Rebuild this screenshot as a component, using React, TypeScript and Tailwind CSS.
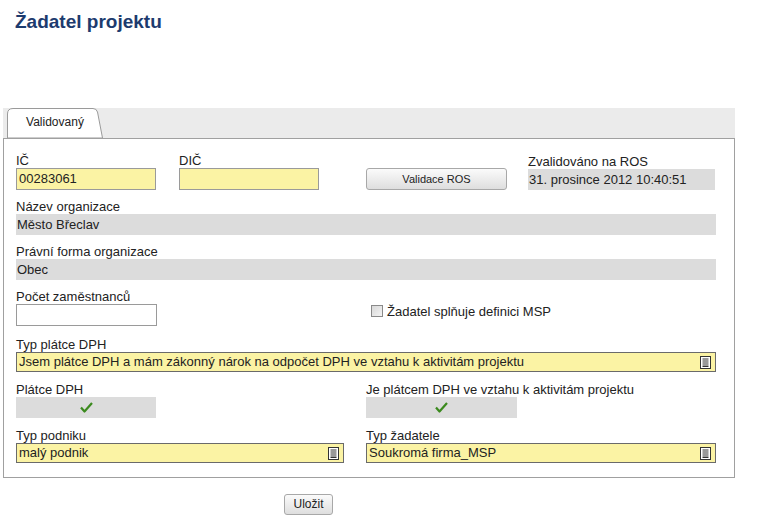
import React from "react";

const font = { fontFamily: '"Liberation Sans", Arial, sans-serif' };

function Label({ children }: { children: React.ReactNode }) {
  return <div className="text-[13px] leading-[15px] text-[#222]">{children}</div>;
}

function YellowInput({ value, w }: { value?: string; w: string }) {
  return (
    <div className={`${w} h-[22px] border border-[#9a9a9a] bg-[#fbf3a4] pl-[2px] text-[13px] leading-[20px] text-[#222]`}>
      {value}
    </div>
  );
}

function GrayField({ value, w, children }: { value?: string; w: string; children?: React.ReactNode }) {
  return (
    <div className={`${w} h-[21px] bg-[#dcdcdc] pl-[1px] text-[13px] leading-[21px] text-[#222]`}>
      {value}
      {children}
    </div>
  );
}

function ListIcon() {
  return (
    <svg width="11" height="13" viewBox="0 0 11 13" className="shrink-0">
      <rect x="0.5" y="0.5" width="10" height="12" fill="#fff" stroke="#333" />
      <path d="M2.5 3h6M2.5 5h6M2.5 7h6M2.5 9h6M2.5 10.5h6" stroke="#333" strokeWidth="1" />
    </svg>
  );
}

function Select({ value, w }: { value: string; w: string }) {
  return (
    <div className={`${w} flex h-[20px] items-center justify-between border border-[#6a6a6a] bg-[#fbf3a4] pl-[2px] pr-[4px] text-[13px] text-[#222]`}>
      <span className="leading-[18px]">{value}</span>
      <ListIcon />
    </div>
  );
}

function Check() {
  return (
    <svg width="13" height="11" viewBox="0 0 13 11">
      <path d="M1 5.5 L4.5 9.5 L12 1" fill="none" stroke="#3b8a1e" strokeWidth="2.2" strokeLinejoin="round" />
    </svg>
  );
}

export default function App() {
  return (
    <div className="min-h-[531px] w-[757px] bg-white" style={font}>
      <h1 className="pl-[15px] pt-[10px] text-[19px] font-bold leading-[23px] text-[#1d3b6e]">Žadatel projektu</h1>

      <div className="ml-[3px] mt-[75px] w-[732px]">
        <div className="h-[30px] bg-[#ebebeb] pl-[4px]">
          <div className="relative h-[30px] w-[96px]">
            <svg className="absolute inset-0" width="96" height="30" viewBox="0 0 96 30">
              <path d="M0.5 30 V6 Q0.5 0.5 6 0.5 H86 Q89.5 0.5 90.5 4 L95.5 30 Z" fill="#fff" stroke="#9a9a9a" />
            </svg>
            <div className="relative pt-[7px] text-center text-[12px] leading-[14px] text-[#222]">Validovaný</div>
          </div>
        </div>

        <div className="border border-[#a0a0a0] pb-[14px] pl-[12px] pr-[17px] pt-[14px]">
          <div className="flex items-end">
            <div>
              <Label>IČ</Label>
              <YellowInput value="00283061" w="w-[140px]" />
            </div>
            <div className="ml-[23px]">
              <Label>DIČ</Label>
              <YellowInput w="w-[140px]" />
            </div>
            <button className="ml-[47px] h-[22px] w-[141px] rounded-[3px] border border-[#a8a8a8] bg-gradient-to-b from-[#fbfbfb] to-[#dedede] text-[11px] text-[#222]">
              Validace ROS
            </button>
            <div className="ml-[21px]">
              <Label>Zvalidováno na ROS</Label>
              <GrayField value="31. prosince 2012 10:40:51" w="w-[187px]" />
            </div>
          </div>

          <div className="mt-[9px]">
            <Label>Název organizace</Label>
            <GrayField value="Město Břeclav" w="w-[700px]" />
          </div>

          <div className="mt-[9px]">
            <Label>Právní forma organizace</Label>
            <GrayField value="Obec" w="w-[700px]" />
          </div>

          <div className="mt-[9px] grid grid-cols-[328px_350px] gap-x-[22px]">
            <div>
              <Label>Počet zaměstnanců</Label>
              <div className="h-[22px] w-[141px] border border-[#9a9a9a] bg-white" />
            </div>
            <label className="flex items-center self-end pb-[5px] pl-[5px] text-[13px] text-[#222]">
              <span className="mr-[4px] h-[12px] w-[12px] border border-[#8a8a8a] bg-gradient-to-br from-[#d8d8d8] to-[#f4f4f4]" />
              Žadatel splňuje definici MSP
            </label>
          </div>

          <div className="mt-[11px]">
            <Label>Typ plátce DPH</Label>
            <Select value="Jsem plátce DPH a mám zákonný nárok na odpočet DPH ve vztahu k aktivitám projektu" w="w-[700px]" />
          </div>

          <div className="mt-[10px] grid grid-cols-[328px_350px] gap-x-[22px]">
            <div>
              <Label>Plátce DPH</Label>
              <div className="flex h-[21px] w-[140px] items-center justify-center bg-[#dcdcdc]">
                <Check />
              </div>
            </div>
            <div>
              <Label>Je plátcem DPH ve vztahu k aktivitám projektu</Label>
              <div className="flex h-[21px] w-[151px] items-center justify-center bg-[#dcdcdc]">
                <Check />
              </div>
            </div>
          </div>

          <div className="mt-[10px] grid grid-cols-[328px_350px] gap-x-[22px]">
            <div>
              <Label>Typ podniku</Label>
              <Select value="malý podnik" w="w-[328px]" />
            </div>
            <div>
              <Label>Typ žadatele</Label>
              <Select value="Soukromá firma_MSP" w="w-[350px]" />
            </div>
          </div>
        </div>

        <div className="mt-[13px] pl-[281px]">
          <button className="h-[21px] w-[49px] rounded-[3px] border border-[#a8a8a8] bg-gradient-to-b from-[#fbfbfb] to-[#dedede] text-[12px] text-[#222]">
            Uložit
          </button>
        </div>
      </div>
    </div>
  );
}
